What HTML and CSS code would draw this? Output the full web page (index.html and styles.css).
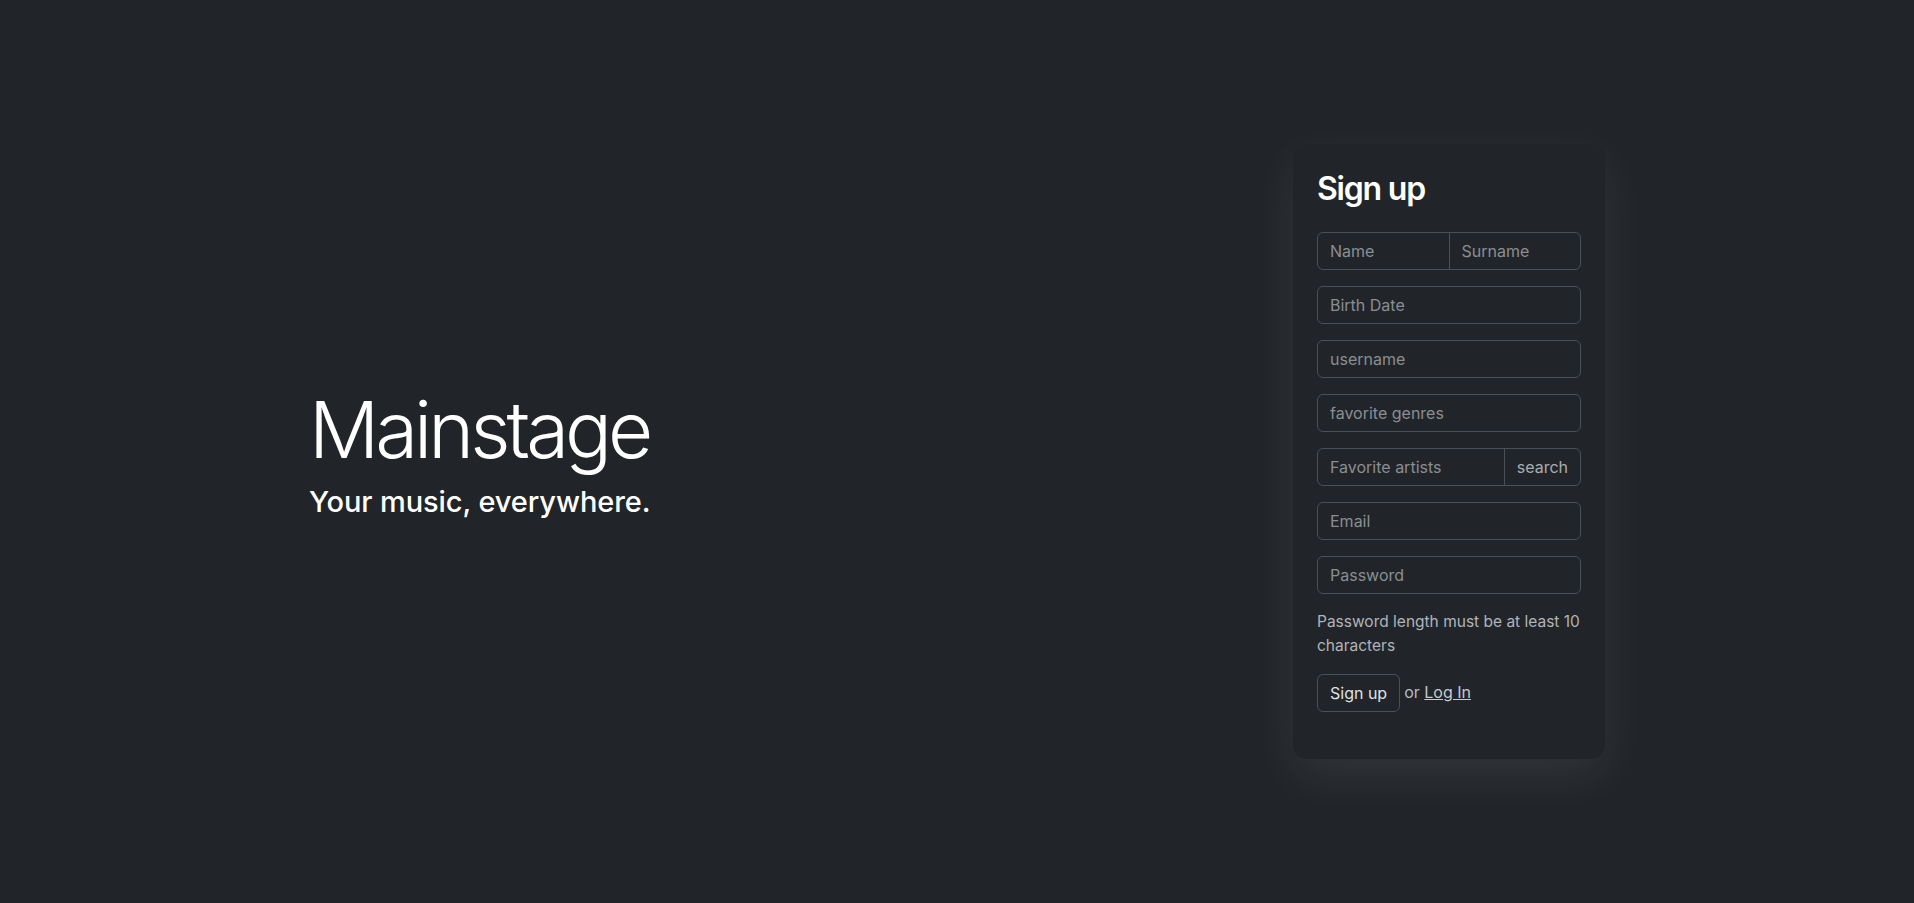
FILE: index.html
```html
<!DOCTYPE html>
<html lang="en">
<head>
<meta charset="utf-8">
<title>Mainstage</title>
<link rel="stylesheet" href="styles.css">
</head>
<body>
<main class="page">
  <div class="row">
    <section class="hero">
      <h1 class="display">Mainstage</h1>
      <h3 class="tagline">Your music, everywhere.</h3>
    </section>
    <section class="side">
      <form class="card">
        <h2 class="card-title">Sign up</h2>
        <div class="field group">
          <input class="control" type="text" placeholder="Name">
          <input class="control" type="text" placeholder="Surname">
        </div>
        <div class="field">
          <input class="control" type="text" placeholder="Birth Date">
        </div>
        <div class="field">
          <input class="control" type="text" placeholder="username">
        </div>
        <div class="field">
          <input class="control" type="text" placeholder="favorite genres">
        </div>
        <div class="field group">
          <input class="control" type="text" placeholder="Favorite artists">
          <button class="btn addon" type="button">search</button>
        </div>
        <div class="field">
          <input class="control" type="email" placeholder="Email">
        </div>
        <div class="field">
          <input class="control" type="password" placeholder="Password">
        </div>
        <p class="help">Password length must be at least 10 characters</p>
        <div class="actions">
          <button class="btn" type="submit">Sign up</button>
          <span class="or">or <a href="#" class="link">Log In</a></span>
        </div>
      </form>
    </section>
  </div>
</main>
</body>
</html>
```

FILE: styles.css
```css
* { box-sizing: border-box; }
html, body {
  margin: 0;
  background: #212529;
  color: #dee2e6;
  font-family: Inter, "Noto Sans", "Liberation Sans", sans-serif;
  font-size: 16px;
  line-height: 1.5;
}
.page {
  max-width: 1320px;
  margin: 0 auto;
  min-height: 100vh;
  display: flex;
  align-items: center;
}
.row {
  width: 100%;
  display: grid;
  grid-template-columns: 7fr 5fr;
  align-items: center;
}
.hero { padding: 0 12px; }
.display {
  margin: 0 0 9px;
  font-size: 78px;
  font-weight: 300;
  line-height: 1.2;
  color: #fff;
  letter-spacing: -4px;
}
.tagline {
  margin: 0;
  font-size: 29px;
  font-weight: 500;
  line-height: 1.2;
  color: #fff;
  letter-spacing: -0.1px;
}
.side {
  padding: 0 12px;
  display: flex;
  justify-content: flex-end;
}
.card {
  width: 312px;
  padding: 26px 24px 24px;
  background: #212529;
  border-radius: 14px;
  box-shadow: 0 16px 48px rgba(222, 226, 230, 0.09);
}
.card-title {
  margin: 0 0 23px;
  font-size: 32px;
  font-weight: 600;
  line-height: 1.2;
  color: #fff;
  letter-spacing: -1.2px;
}
.field {
  margin-bottom: 16px;
  display: flex;
}
.control {
  width: 100%;
  min-width: 0;
  height: 38px;
  padding: 6px 12px;
  font: inherit;
  font-size: 16px;
  line-height: 1.5;
  color: #dee2e6;
  background: #212529;
  border: 1px solid #495057;
  border-radius: 6px;
  outline: none;
}
.control::placeholder { color: #8a8e93; }
.group .control { flex: 1 1 auto; }
.group > * + * { margin-left: -1px; }
.group > :not(:last-child) { border-top-right-radius: 0; border-bottom-right-radius: 0; }
.group > :not(:first-child) { border-top-left-radius: 0; border-bottom-left-radius: 0; }
.btn {
  height: 38px;
  padding: 6px 12px;
  font: inherit;
  font-size: 16px;
  line-height: 1.5;
  color: #dee2e6;
  background: transparent;
  border: 1px solid #495057;
  border-radius: 6px;
  cursor: pointer;
}
.addon {
  flex: 0 0 auto;
  color: #a9adb2;
}
.help {
  margin: 0 0 16px;
  color: #b0b4b8;
  font-size: 15.5px;
  line-height: 24px;
}
.actions {
  display: flex;
  align-items: center;
  gap: 4px;
  margin-bottom: 23px;
}
.or {
  color: #b8bcc0;
  position: relative;
  top: -1px;
}
.link {
  color: #c6cacd;
  text-decoration: underline;
}
```
